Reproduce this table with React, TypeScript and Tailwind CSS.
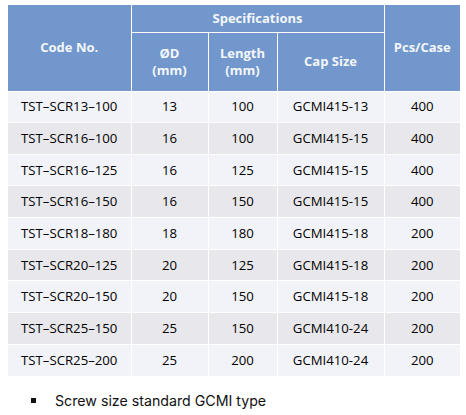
import React from "react";

const rows = [
  ["TST–SCR13–100", "13", "100", "GCMI415-13", "400"],
  ["TST–SCR16–100", "16", "100", "GCMI415-15", "400"],
  ["TST–SCR16–125", "16", "125", "GCMI415-15", "400"],
  ["TST–SCR16–150", "16", "150", "GCMI415-15", "400"],
  ["TST–SCR18–180", "18", "180", "GCMI415-18", "200"],
  ["TST–SCR20–125", "20", "125", "GCMI415-18", "200"],
  ["TST–SCR20–150", "20", "150", "GCMI415-18", "200"],
  ["TST–SCR25–150", "25", "150", "GCMI410-24", "200"],
  ["TST–SCR25–200", "25", "200", "GCMI410-24", "200"],
];

export default function App() {
  return (
    <div className="w-[466px] h-[415px] bg-white pt-[5px] pl-[8px]" style={{ fontFamily: '"Open Sans", "Noto Sans", sans-serif' }}>
      <table className="table-fixed border-collapse w-[452px] text-[13.2px]">
        <colgroup>
          <col className="w-[123px]" />
          <col className="w-[77px]" />
          <col className="w-[69px]" />
          <col className="w-[107px]" />
          <col className="w-[76px]" />
        </colgroup>
        <thead className="bg-[#7197cc] text-[#f4f6fa] font-bold text-[13px]">
          <tr className="h-[27px]">
            <th rowSpan={2} className="border border-white border-t-0 border-l-0 font-bold">Code No.</th>
            <th colSpan={3} className="border border-white border-t-0 font-bold">Specifications</th>
            <th rowSpan={2} className="border border-white border-t-0 border-r-0 font-bold">Pcs/Case</th>
          </tr>
          <tr className="h-[59px]">
            <th className="border border-white font-bold leading-[17px]">ØD<br />(mm)</th>
            <th className="border border-white font-bold leading-[17px]">Length<br />(mm)</th>
            <th className="border border-white font-bold">Cap Size</th>
          </tr>
        </thead>
        <tbody className="text-[#000]">
          {rows.map((r, i) => (
            <tr key={i} className={`h-[31.67px] ${i % 2 === 0 ? "bg-[#f2f3f8]" : "bg-[#e8e8ec]"}`}>
              {r.map((c, j) => (
                <td key={j} className={`text-center leading-none border border-white ${j === 0 ? "border-l-0" : ""} ${j === 4 ? "border-r-0" : ""} ${i === 8 ? "border-b-0" : ""}`}>{c}</td>
              ))}
            </tr>
          ))}
        </tbody>
      </table>
      <div className="flex items-center mt-[16px] pl-[23px] text-[14.2px] leading-[18px] text-[#111]" style={{ fontFamily: 'Inter, "Noto Sans", sans-serif' }}>
        <span className="w-[5px] h-[5px] bg-[#111] mr-[19px]" />
        <span>Screw size standard GCMI type</span>
      </div>
    </div>
  );
}
